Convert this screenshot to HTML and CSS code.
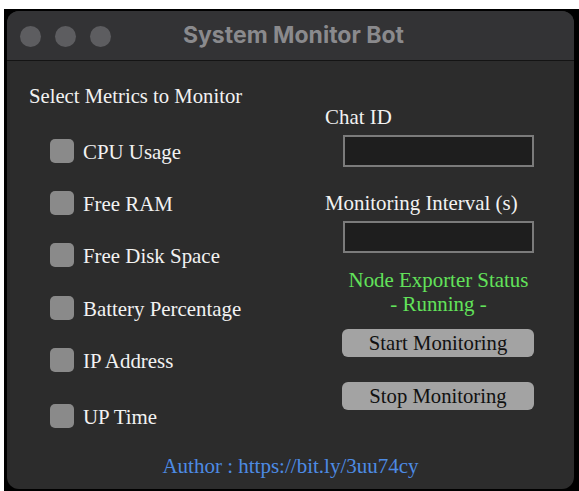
FILE: index.html
```html
<!DOCTYPE html>
<html lang="en">
<head>
<meta charset="utf-8">
<title>System Monitor Bot</title>
<link rel="stylesheet" href="styles.css">
</head>
<body>
<div class="screen">
  <div class="window">
    <header class="titlebar">
      <div class="lights">
        <span class="light"></span>
        <span class="light"></span>
        <span class="light"></span>
      </div>
      <div class="title">System Monitor Bot</div>
    </header>
    <main class="content">
      <div class="columns">
        <section class="metrics">
          <h2 class="heading">Select Metrics to Monitor</h2>
          <ul class="checklist">
            <li class="check-row"><span class="box"></span><span class="check-label">CPU Usage</span></li>
            <li class="check-row"><span class="box"></span><span class="check-label">Free RAM</span></li>
            <li class="check-row"><span class="box"></span><span class="check-label">Free Disk Space</span></li>
            <li class="check-row"><span class="box"></span><span class="check-label">Battery Percentage</span></li>
            <li class="check-row"><span class="box"></span><span class="check-label">IP Address</span></li>
            <li class="check-row last"><span class="box"></span><span class="check-label">UP Time</span></li>
          </ul>
        </section>
        <section class="settings">
          <label class="field-label first">Chat ID</label>
          <div class="field"></div>
          <label class="field-label">Monitoring Interval (s)</label>
          <div class="field"></div>
          <div class="status">Node Exporter Status<br>- Running -</div>
          <button class="btn start">Start Monitoring</button>
          <button class="btn stop">Stop Monitoring</button>
        </section>
      </div>
      <div class="author">Author : https://bit.ly/3uu74cy</div>
    </main>
  </div>
</div>
</body>
</html>
```
FILE: styles.css
```css
html, body {
  margin: 0;
  background: #ffffff;
}

.screen {
  margin: 9px 0 0 4px;
  width: 567px;
  height: 478px;
  padding: 2px 5px 2px 3px;
  background: #000000;
}

.window {
  height: 478px;
  border-radius: 12px;
  overflow: hidden;
  background: #2c2c2c;
  display: flex;
  flex-direction: column;
}

.titlebar {
  height: 49px;
  flex: none;
  background: #333335;
  border-bottom: 1px solid #141414;
  display: flex;
  align-items: center;
  position: relative;
}

.lights {
  display: flex;
  gap: 14px;
  padding-left: 13px;
  padding-top: 2px;
}

.light {
  width: 21px;
  height: 21px;
  border-radius: 50%;
  background: #5d5d60;
}

.title {
  position: absolute;
  left: 0;
  right: 0;
  top: 11px;
  text-align: center;
  padding-left: 6px;
  font-family: Inter, "Open Sans", sans-serif;
  font-weight: 700;
  font-size: 23px;
  line-height: 26px;
  color: #8a8a8d;
}

.content {
  flex: 1;
  display: flex;
  flex-direction: column;
  font-family: "Liberation Serif", "Times New Roman", serif;
  color: #f2f2f2;
}

.columns {
  display: flex;
  padding-top: 23px;
  height: 355px;
}

.metrics {
  width: 296px;
  padding-left: 22px;
}

.heading {
  margin: 0;
  font-weight: 400;
  font-size: 20.7px;
  line-height: 24px;
}

.checklist {
  list-style: none;
  margin: 31px 0 0 21px;
  padding: 0;
  display: flex;
  flex-direction: column;
  gap: 28.2px;
}

.check-row {
  display: flex;
  align-items: center;
  gap: 9px;
  height: 24px;
}

.check-row.last {
  margin-top: 4px;
}

.box {
  width: 24px;
  height: 24px;
  border-radius: 5px;
  background: #8a8a8a;
  flex: none;
}

.check-label {
  font-size: 20.9px;
  line-height: 24px;
  padding-top: 2px;
}

.settings {
  width: 210px;
  display: flex;
  flex-direction: column;
}

.field-label {
  font-size: 20.9px;
  line-height: 24px;
  margin-top: 24px;
  display: block;
}

.field-label.first {
  margin-top: 21px;
}

.field {
  margin: 6px 0 0 18px;
  width: 187px;
  height: 28px;
  border: 2px solid #7b7b7b;
  background: #1e1e1e;
}

.status {
  margin-top: 15px;
  margin-left: 18px;
  width: 191px;
  text-align: center;
  color: #62e25a;
  font-size: 20.9px;
  line-height: 24px;
}

.btn {
  margin-left: 17px;
  width: 192px;
  height: 28px;
  border: none;
  border-radius: 6px;
  background: #a3a3a3;
  color: #111111;
  font-family: "Liberation Serif", "Times New Roman", serif;
  font-size: 20.7px;
  line-height: 28px;
  padding: 0;
}

.btn.start {
  margin-top: 13px;
}

.btn.stop {
  margin-top: 25px;
}

.author {
  text-align: center;
  color: #4d8be4;
  font-size: 21px;
  line-height: 24px;
  margin-top: 15px;
}
```
